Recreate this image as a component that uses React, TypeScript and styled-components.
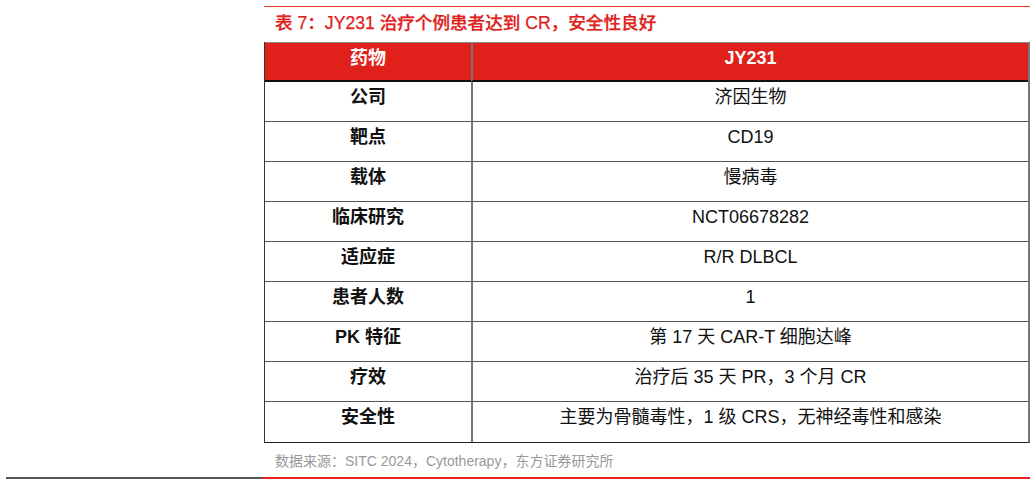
import React from "react";
import styled, { createGlobalStyle } from "styled-components";

const GlobalStyle = createGlobalStyle`
  html, body {
    margin: 0;
    padding: 0;
    background: #ffffff;
  }
  body {
    font-family: "Liberation Sans", "Noto Sans CJK SC", sans-serif;
  }
`;

const Page = styled.div`
  width: 1036px;
  height: 484px;
  display: flex;
  flex-direction: column;
  padding-top: 6px;
  box-sizing: border-box;
`;

const Content = styled.div`
  margin-left: 264px;
  width: 766px;
  display: flex;
  flex-direction: column;
`;

const TopRule = styled.div`
  height: 1px;
  background: #e8352c;
`;

const Title = styled.div`
  height: 35px;
  padding: 5px 0 0 11px;
  box-sizing: border-box;
  color: #e0201a;
  font-size: 17.6px;
  font-weight: 500;
  line-height: 22px;
  -webkit-text-stroke: 0.25px #e0201a;
`;

const Table = styled.div`
  display: grid;
  grid-template-columns: 206px 1fr;
  border-left: 1px solid #333;
  border-right: 2px solid #777;
  border-bottom: 1px solid #222;
`;

const Cell = styled.div<{ $head?: boolean; $label?: boolean; $last?: boolean }>`
  height: 40px;
  box-sizing: border-box;
  padding-top: 4px;
  text-align: center;
  font-size: 18px;
  line-height: 22px;
  color: ${(p) => (p.$head ? "#ffffff" : "#111")};
  font-weight: ${(p) => (p.$head || p.$label ? 700 : 400)};
  background: ${(p) => (p.$head ? "#e0201a" : "#ffffff")};
  border-top: ${(p) => (p.$head ? "1px solid #888" : "none")};
  border-bottom: ${(p) =>
    p.$last ? "none" : p.$head ? "2px solid #111" : "1px solid #555"};
  border-left: ${(p) => (p.$label ? "none" : "2px solid #777")};
`;

const Source = styled.div`
  padding: 9px 0 0 11px;
  height: 34px;
  box-sizing: border-box;
  color: #999;
  font-size: 14px;
  line-height: 18px;
`;

const BottomRule = styled.div`
  display: flex;
  height: 2px;
  margin-left: 6px;
  width: 1024px;
`;

const RuleSegment = styled.div<{ $color: string; $w: number }>`
  width: ${(p) => p.$w}px;
  background: ${(p) => p.$color};
`;

const rows: [string, string][] = [
  ["公司", "济因生物"],
  ["靶点", "CD19"],
  ["载体", "慢病毒"],
  ["临床研究", "NCT06678282"],
  ["适应症", "R/R DLBCL"],
  ["患者人数", "1"],
  ["PK 特征", "第 17 天 CAR-T 细胞达峰"],
  ["疗效", "治疗后 35 天 PR，3 个月 CR"],
  ["安全性", "主要为骨髓毒性，1 级 CRS，无神经毒性和感染"],
];

export default function App() {
  return (
    <Page>
      <GlobalStyle />
      <Content>
        <TopRule />
        <Title>表 7：JY231 治疗个例患者达到 CR，安全性良好</Title>
        <Table>
          <Cell $head $label>
            药物
          </Cell>
          <Cell $head>JY231</Cell>
          {rows.map(([k, v], i) => (
            <React.Fragment key={k}>
              <Cell $label $last={i === rows.length - 1}>
                {k}
              </Cell>
              <Cell $last={i === rows.length - 1}>{v}</Cell>
            </React.Fragment>
          ))}
        </Table>
        <Source>数据来源：SITC 2024，Cytotherapy，东方证券研究所</Source>
      </Content>
      <BottomRule>
        <RuleSegment $color="#555" $w={257} />
        <RuleSegment $color="#e8261c" $w={767} />
      </BottomRule>
    </Page>
  );
}
